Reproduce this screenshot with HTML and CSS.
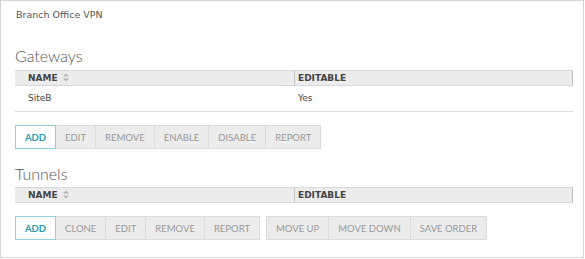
FILE: index.html
```html
<!DOCTYPE html>
<html lang="en">
<head>
    <meta charset="UTF-8">
    <title>Branch Office VPN</title>
    <link rel="stylesheet" href="styles.css">
</head>
<body>
    <div class="panel">
        <div class="title">Branch Office VPN</div>

        <section class="section">
            <h2>Gateways</h2>
            <div class="grid">
                <div class="grid-head">
                    <div class="col col-name">NAME
                        <svg class="sort" width="6" height="9" viewBox="0 0 6 9"><path d="M0 3.5L3 0.5L6 3.5Z M0 5.5L3 8.5L6 5.5Z" fill="#b5b5b5"/></svg>
                    </div>
                    <div class="col col-edit">EDITABLE</div>
                </div>
                <div class="grid-row">
                    <div class="col col-name">SiteB</div>
                    <div class="col col-edit">Yes</div>
                </div>
            </div>
            <div class="toolbar">
                <div class="btn-group">
                    <button class="btn primary">ADD</button>
                    <button class="btn">EDIT</button>
                    <button class="btn">REMOVE</button>
                    <button class="btn">ENABLE</button>
                    <button class="btn">DISABLE</button>
                    <button class="btn">REPORT</button>
                </div>
            </div>
        </section>

        <section class="section">
            <h2>Tunnels</h2>
            <div class="grid">
                <div class="grid-head">
                    <div class="col col-name">NAME
                        <svg class="sort" width="6" height="9" viewBox="0 0 6 9"><path d="M0 3.5L3 0.5L6 3.5Z M0 5.5L3 8.5L6 5.5Z" fill="#b5b5b5"/></svg>
                    </div>
                    <div class="col col-edit">EDITABLE</div>
                </div>
            </div>
            <div class="toolbar">
                <div class="btn-group">
                    <button class="btn primary">ADD</button>
                    <button class="btn">CLONE</button>
                    <button class="btn">EDIT</button>
                    <button class="btn">REMOVE</button>
                    <button class="btn">REPORT</button>
                </div>
                <div class="btn-group">
                    <button class="btn">MOVE UP</button>
                    <button class="btn">MOVE DOWN</button>
                    <button class="btn">SAVE ORDER</button>
                </div>
            </div>
        </section>
    </div>
</body>
</html>
```

FILE: styles.css
```css
body {
    margin: 0;
    padding: 0;
    background-color: #fff;
    font-family: "DejaVu Sans", Verdana, sans-serif;
    color: #444;
}
.panel {
    box-sizing: border-box;
    width: 584px;
    height: 258px;
    border: 1px solid #d4d4d4;
    padding: 7px 10px 0 14px;
}
.title {
    font-size: 9.5px;
    line-height: 14px;
    color: #555;
    padding-left: 1px;
}
.section h2 {
    margin: 0 0 4px 0;
    font-family: Lato, "Open Sans", sans-serif;
    font-weight: 300;
    font-size: 16px;
    line-height: 20px;
    color: #555;
}
.section:first-of-type h2 {
    margin-top: 24px;
}
.section + .section h2 {
    margin-top: 15px;
    margin-bottom: 3px;
}
.grid-head,
.grid-row {
    display: grid;
    grid-template-columns: 280px 1fr;
}
.grid-head {
    height: 16px;
    box-sizing: border-box;
    background-color: #ececec;
    border-top: 1px solid #d8d8d8;
    border-bottom: 1px solid #d8d8d8;
    border-right: 1px solid #bdbdbd;
    font-size: 9px;
    font-weight: bold;
    color: #444;
}
.grid-head .col {
    line-height: 14px;
}
.grid-head .col-name {
    border-right: 1px solid #c4c4c4;
}
.grid-row {
    height: 26px;
    box-sizing: border-box;
    border-bottom: 1px solid #dcdcdc;
    font-size: 9px;
    line-height: 25px;
    color: #444;
}
.col-name {
    padding-left: 13px;
}
.col-edit {
    padding-left: 3px;
}
.sort {
    vertical-align: -1px;
    margin-left: 2px;
}
.toolbar {
    display: flex;
    gap: 6px;
    margin-top: 13px;
}
.btn-group {
    display: flex;
}
.btn {
    position: relative;
    height: 24px;
    margin: 0 0 0 -1px;
    padding: 0 9px;
    border: 1px solid #dadada;
    background-color: #ececec;
    color: #999;
    font-family: Lato, "Open Sans", sans-serif;
    font-size: 9.5px;
    cursor: pointer;
}
.btn:first-child {
    margin-left: 0;
}
.btn.primary {
    z-index: 1;
    background-color: #fff;
    border-color: #8fd0da;
    color: #2a9db3;
    font-weight: bold;
}
```
